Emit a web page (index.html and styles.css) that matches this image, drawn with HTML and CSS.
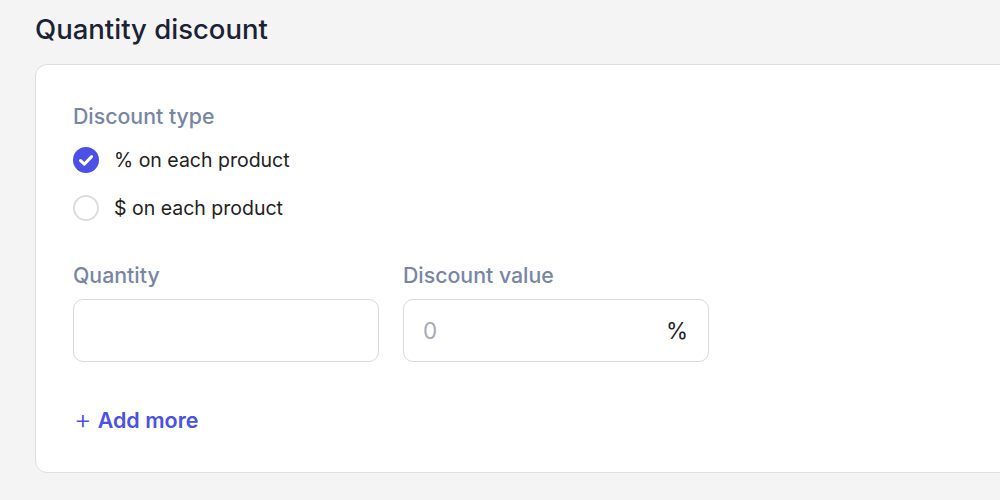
FILE: index.html
```html
<!DOCTYPE html>
<html>
<head>
<meta charset="utf-8">
<link rel="stylesheet" href="styles.css">
</head>
<body>
<div class="page">
  <h1 class="title">Quantity discount</h1>
  <div class="card">
    <div class="section-label">Discount type</div>
    <div class="radios">
      <label class="radio-row">
        <span class="radio checked">
          <svg width="26" height="26" viewBox="0 0 26 26"><circle cx="13" cy="13" r="13" fill="#4b50e6"/><path d="M7.5 13.6l3.8 3.6 7.3-7.6" fill="none" stroke="#fff" stroke-width="3" stroke-linecap="round" stroke-linejoin="round"/></svg>
        </span>
        <span class="radio-text">% on each product</span>
      </label>
      <label class="radio-row">
        <span class="radio"></span>
        <span class="radio-text">$ on each product</span>
      </label>
    </div>
    <div class="fields">
      <div class="field">
        <div class="field-label">Quantity</div>
        <div class="input"></div>
      </div>
      <div class="field">
        <div class="field-label">Discount value</div>
        <div class="input"><span class="placeholder">0</span><span class="suffix">%</span></div>
      </div>
    </div>
    <div class="add-more"><span class="plus">+</span>Add more</div>
  </div>
</div>
</body>
</html>
```
FILE: styles.css
```css
html, body {
  margin: 0;
  padding: 0;
  background: #f4f4f4;
  overflow: hidden;
  font-family: Inter, "Noto Sans", sans-serif;
}
.page {
  padding: 13px 0 0 35px;
  width: 1100px;
}
.title {
  margin: 0;
  font-size: 27.5px;
  line-height: 33px;
  font-weight: 500;
  color: #1b2236;
}
.card {
  margin-top: 18px;
  background: #fff;
  border: 1px solid #dedede;
  border-radius: 12px;
  height: 409px;
  box-sizing: border-box;
  padding: 38px 0 0 37px;
}
.section-label {
  font-size: 21.3px;
  line-height: 26px;
  font-weight: 500;
  color: #7786a5;
}
.radios {
  display: flex;
  flex-direction: column;
  gap: 22px;
  margin-top: 18px;
}
.radio-row {
  display: flex;
  align-items: center;
  gap: 15px;
  height: 26px;
}
.radio {
  width: 26px;
  height: 26px;
  box-sizing: border-box;
  border: 2px solid #dadde3;
  border-radius: 50%;
  display: block;
}
.radio.checked {
  border: none;
}
.radio svg { display: block; }
.radio-text {
  font-size: 19.5px;
  color: #222;
}
.fields {
  display: flex;
  gap: 24px;
  margin-top: 41px;
}
.field {
  width: 306px;
}
.field-label {
  font-size: 21.3px;
  line-height: 26px;
  font-weight: 500;
  color: #7786a5;
}
.input {
  margin-top: 11px;
  height: 63px;
  box-sizing: border-box;
  border: 1px solid #d6d9e0;
  border-radius: 10px;
  display: flex;
  align-items: center;
  justify-content: space-between;
  padding: 0 20px 0 19px;
  font-size: 22.5px;
}
.placeholder { color: #a3aab8; }
.suffix { color: #1f2330; }
.add-more {
  margin-top: 45px;
  font-size: 21.5px;
  font-weight: 600;
  color: #4b50e6;
  display: flex;
  align-items: center;
  padding-left: 1px;
}
.plus {
  font-weight: 300;
  font-size: 27px;
  line-height: 26px;
  margin-right: 6px;
}
```
